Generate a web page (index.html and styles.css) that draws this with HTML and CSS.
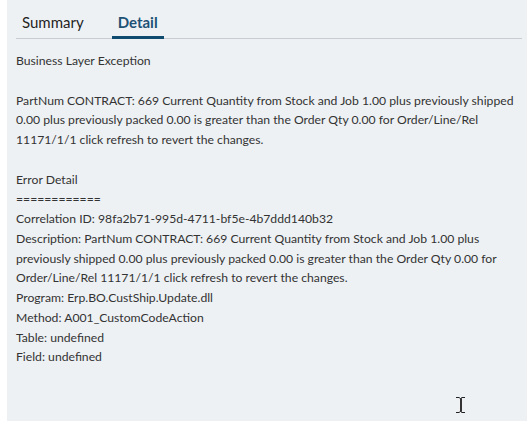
FILE: index.html
```html
<!DOCTYPE html>
<html lang="en">
<head>
    <meta charset="UTF-8">
    <meta name="viewport" content="width=device-width, initial-scale=1.0">
    <title>Error Detail</title>
    <link rel="stylesheet" href="styles.css">
</head>
<body>
    <div class="panel">
        <div class="tabs">
            <div class="tab">Summary</div>
            <div class="tab active">Detail</div>
        </div>
        <div class="detail">Business Layer Exception

PartNum CONTRACT: 669 Current Quantity from Stock and Job 1.00 plus previously shipped 0.00 plus previously packed 0.00 is greater than the Order Qty 0.00 for Order/Line/Rel 11171/1/1 click refresh to revert the changes.

Error Detail
============
Correlation ID: 98fa2b71-995d-4711-bf5e-4b7ddd140b32
Description: PartNum CONTRACT: 669 Current Quantity from Stock and Job 1.00 plus previously shipped 0.00 plus previously packed 0.00 is greater than the Order Qty 0.00 for Order/Line/Rel 11171/1/1 click refresh to revert the changes.
Program: Erp.BO.CustShip.Update.dll
Method: A001_CustomCodeAction
Table: undefined
Field: undefined</div>
        <svg class="cursor" width="12" height="18" viewBox="0 0 12 18">
            <path d="M1 1.5h3l1.5 1 1.5-1h3M6 2v14M1 16.5h3l1.5-1 1.5 1h3" fill="none" stroke="#222" stroke-width="1"/>
            <rect x="5" y="2.5" width="2" height="13" fill="#333"/>
        </svg>
    </div>
</body>
</html>
```

FILE: styles.css
```css
body {
    margin: 0;
    background-color: #ffffff;
    font-family: Lato, "Liberation Sans", sans-serif;
    color: #333333;
}

.panel {
    position: relative;
    margin-left: 7px;
    height: 421px;
    background-color: #eef1f4;
    padding: 0 5px 0 9px;
    box-sizing: border-box;
    overflow: hidden;
}

.tabs {
    display: flex;
    gap: 22px;
    border-bottom: 1px solid #c9ccd0;
    height: 39px;
    box-sizing: border-box;
}

.tab {
    font-size: 15px;
    color: #1f1f1f;
    padding: 13px 6px 0;
    box-sizing: border-box;
}

.tab.active {
    font-weight: bold;
    color: #1d5175;
    border-bottom: 3px solid #0f4a6f;
    margin-bottom: -1px;
}

.detail {
    white-space: pre-wrap;
    font-size: 12.2px;
    line-height: 19.75px;
    padding-top: 12px;
    width: 508px;
}

.cursor {
    position: absolute;
    left: 448px;
    top: 396px;
}
```
